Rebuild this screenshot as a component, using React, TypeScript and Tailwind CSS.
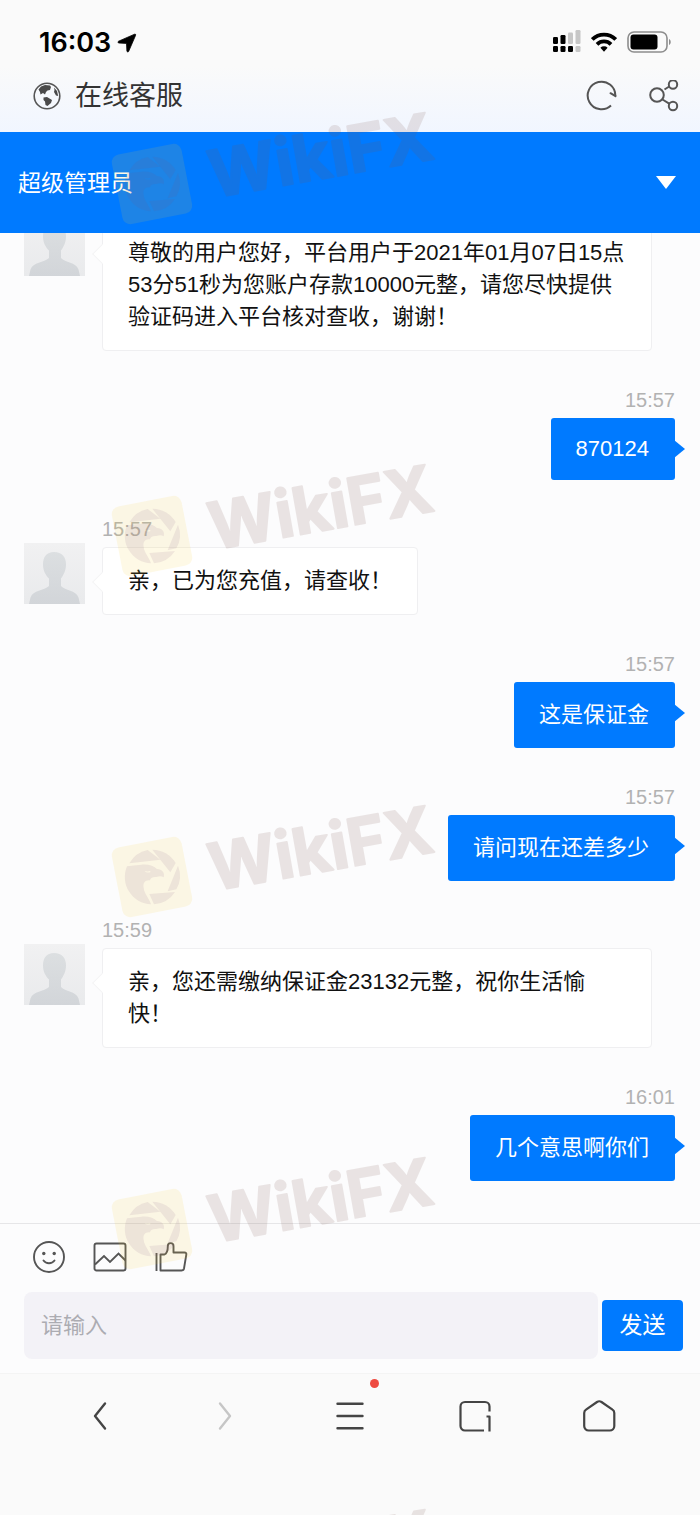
import { useState } from 'react'

type Message = {
  id: number
  from: 'agent' | 'me'
  time: string
  text: string
}

const MESSAGES: Message[] = [
  {
    id: 1,
    from: 'agent',
    time: '15:54',
    text: '尊敬的用户您好，平台用户于2021年01月07日15点53分51秒为您账户存款10000元整，请您尽快提供验证码进入平台核对查收，谢谢！',
  },
  { id: 2, from: 'me', time: '15:57', text: '870124' },
  { id: 3, from: 'agent', time: '15:57', text: '亲，已为您充值，请查收！' },
  { id: 4, from: 'me', time: '15:57', text: '这是保证金' },
  { id: 5, from: 'me', time: '15:57', text: '请问现在还差多少' },
  {
    id: 6,
    from: 'agent',
    time: '15:59',
    text: '亲，您还需缴纳保证金23132元整，祝你生活愉快！',
  },
  { id: 7, from: 'me', time: '16:01', text: '几个意思啊你们' },
]

const WATERMARK_TOPS = ['top-[94px]', 'top-[446px]', 'top-[787px]', 'top-[1139px]', 'top-[1491px]']

function StatusBar() {
  return (
    <div className="flex h-[66px] items-end justify-between pr-7 pb-[7px] pl-[39px]">
      <div className="flex items-center gap-1.5">
        <span className="font-['Inter',sans-serif] text-[27px] leading-8 font-semibold text-black">16:03</span>
        <svg width="20" height="20" viewBox="0 0 20 20" aria-hidden="true">
          <path
            d="M17.6 1.2 1.6 8.2c-1 .5-.8 1.7.3 1.8l7.6.4.4 7.6c.1 1.1 1.4 1.3 1.8.3l6.9-16c.3-.8-.3-1.4-1-1.1Z"
            fill="#000"
            stroke="#000"
            strokeWidth=".8"
          />
        </svg>
      </div>
      <div className="flex items-center gap-2.5 pb-1.5">
        <svg width="29" height="23" viewBox="0 0 29 23" aria-hidden="true">
          <g fill="#000">
            <rect x="1" y="7" width="5" height="7" rx="1.2" />
            <rect x="8.5" y="5" width="5" height="9" rx="1.2" />
            <rect x="1" y="16" width="5" height="6" rx="1.2" />
            <rect x="8.5" y="16" width="5" height="6" rx="1.2" />
            <rect x="16" y="16" width="5" height="6" rx="1.2" />
          </g>
          <g fill="#c6c6c6">
            <rect x="16" y="2.5" width="5" height="11.5" rx="1.2" />
            <rect x="23.5" y="0" width="5" height="14" rx="1.2" />
            <rect x="23.5" y="16" width="5" height="6" rx="1.2" />
          </g>
        </svg>
        <svg width="26" height="20" viewBox="0 0 26 20" aria-hidden="true">
          <g fill="none" stroke="#000" strokeWidth="3.8">
            <path d="M1.3 7.5a16.7 16.7 0 0 1 23.4 0" />
            <path d="M6 12.3a10 10 0 0 1 14 0" />
          </g>
          <path d="M9.4 15.8a5.2 5.2 0 0 1 7.2 0L13 19.7Z" fill="#000" />
        </svg>
        <svg width="45" height="22" viewBox="0 0 45 22" aria-hidden="true">
          <rect x="1" y="1" width="39" height="20" rx="6" fill="none" stroke="#8d8d8d" strokeWidth="1.6" />
          <rect x="3.5" y="3.5" width="27" height="15" rx="3" fill="#000" />
          <path d="M42 8c2.3 1 2.3 5 0 6Z" fill="#8d8d8d" />
        </svg>
      </div>
    </div>
  )
}

function TitleBar() {
  return (
    <div className="flex h-[66px] items-center justify-between bg-linear-to-b from-[#fafafa] to-[#f1f6ff] pr-[21px] pb-1.5 pl-[33px]">
      <div className="flex items-center gap-3.5">
        <svg width="28" height="28" viewBox="0 0 28 28" aria-hidden="true">
          <circle cx="14" cy="14" r="12.8" fill="none" stroke="#555" strokeWidth="1.6" />
          <path
            d="M5.5 7.5 8 4.500 12 3l5 .5 1 1.500-1 3-2.500.5L13 10l-1 2.500-2-1.500-2.500 1.500-.5-2.500Z"
            fill="#4a4a4a"
          />
          <path d="M10.500 15.500 14 15l5 3-1 3-3.500 3-2-1-.5-3.500-1.500-1.500Z" fill="#4a4a4a" />
          <path d="m21 5.500 3 3.500 1.200 5-2.200-.5-2-3.500.5-2Z" fill="#4a4a4a" />
        </svg>
        <h1 className="text-[27px] leading-9 text-[#333]">在线客服</h1>
      </div>
      <div className="flex items-center gap-[31px]">
        <button type="button" aria-label="刷新" className="size-8">
          <svg width="32" height="32" viewBox="0 0 32 32" fill="none" stroke="#555" strokeWidth="2">
            <path d="M25 25.500A13.800 13.800 0 1 1 29.300 16" />
            <path d="M24.500 13.200 29.500 16.200" strokeLinecap="round" />
          </svg>
        </button>
        <button type="button" aria-label="分享" className="h-8 w-[30px]">
          <svg width="30" height="32" viewBox="0 0 30 32" fill="none" stroke="#555" strokeWidth="2">
            <circle cx="8" cy="15" r="6.8" />
            <circle cx="24" cy="4.500" r="4.200" />
            <circle cx="24" cy="26" r="4.200" />
            <path d="m15.500 9.500 4.700-3M13.500 19.500l6.700 4.200" />
          </svg>
        </button>
      </div>
    </div>
  )
}

function Avatar() {
  return (
    <svg className="shrink-0" width="61" height="61" viewBox="0 0 61 61" role="img" aria-label="客服头像">
      <defs>
        <linearGradient id="avatarBg" x1="0" y1="0" x2="0" y2="1">
          <stop offset="0" stopColor="#f1f1f2" />
          <stop offset="1" stopColor="#e9eaec" />
        </linearGradient>
        <linearGradient id="avatarBody" x1="0" y1="0" x2="0" y2="1">
          <stop offset="0" stopColor="#dcdfe1" />
          <stop offset="1" stopColor="#d2d5d9" />
        </linearGradient>
      </defs>
      <rect width="61" height="61" fill="url(#avatarBg)" />
      <path
        d="M30 9c8 0 12 5 12 12.500 0 6-2.500 10.500-5 14V43c4 4.500 15 4 17.500 11.500L56 61H5l1.500-6.500C9 47 20 47.500 25 43v-7.500c-3.500-3.500-6-8-6-14C19 14 22.500 9 30 9Z"
        fill="url(#avatarBody)"
      />
    </svg>
  )
}

function AgentMessage({ message }: { message: Message }) {
  return (
    <li className="mr-[23px] flex gap-[17px] pt-[37px]">
      <div className="mt-[26px]">
        <Avatar />
      </div>
      <div className="flex min-w-0 flex-col items-start">
        <time className="mb-1.5 text-xl leading-6 text-[#b2b2b2]">{message.time}</time>
        <div className="relative rounded-sm border border-[#efeff1] bg-white px-[25px] py-[17px]">
          <span className="absolute top-[27px] -left-2 size-3.5 rotate-45 border-b border-l border-[#f4f4f5] bg-white" />
          <p className="text-[22px] leading-8 text-[#111]">{message.text}</p>
        </div>
      </div>
    </li>
  )
}

function MyMessage({ message }: { message: Message }) {
  const digitsOnly = /^\d+$/.test(message.text)
  return (
    <li className="flex flex-col items-end pt-[37px]">
      <time className="mb-1.5 text-xl leading-6 text-[#b2b2b2]">{message.time}</time>
      <div className="relative rounded-[3px] bg-[#007aff] py-[17px] pr-[26px] pl-[25px]">
        <svg className="absolute top-[22px] -right-2.5" width="11" height="18" viewBox="0 0 11 18" aria-hidden="true">
          <path d="M0 0 11 9 0 18Z" fill="#007aff" />
        </svg>
        <p className={`text-[22px] text-white ${digitsOnly ? 'leading-7' : 'leading-8'}`}>{message.text}</p>
      </div>
    </li>
  )
}

function Composer() {
  const [draft, setDraft] = useState('')

  return (
    <form
      className="border-t border-[#e6e6e8] bg-[#fcfcfd] pt-4 pr-[17px] pb-3.5 pl-6"
      onSubmit={(e) => {
        e.preventDefault()
        setDraft('')
      }}
    >
      <div className="flex h-[34px] gap-[27px] pl-2">
        <button type="button" aria-label="表情">
          <svg width="34" height="34" viewBox="0 0 34 34" fill="none" stroke="#555" strokeWidth="1.9">
            <circle cx="17" cy="17" r="15" />
            <circle cx="11.8" cy="13.5" r="1.7" fill="#555" stroke="none" />
            <circle cx="22.2" cy="13.5" r="1.7" fill="#555" stroke="none" />
            <path d="M11.5 20.500c2.500 3.600 8.500 3.600 11 0" strokeLinecap="round" />
          </svg>
        </button>
        <button type="button" aria-label="图片">
          <svg width="34" height="34" viewBox="0 0 34 34" fill="none" stroke="#555" strokeWidth="1.9">
            <rect x="1.5" y="3.5" width="31" height="27" rx="2" />
            <path d="m2 24.500 9-8.500 6 6 8.500-8.500 7 7" />
          </svg>
        </button>
        <button type="button" aria-label="点赞">
          <svg width="34" height="34" viewBox="0 0 34 34" fill="none" stroke="#555" strokeWidth="1.9">
            <path d="M2.500 13v18" />
            <path
              d="M6.500 14.500h4c3.500-1.500 3.300-5 3.300-8.500 0-3.800 5.700-3.800 5.700 0v6.500h11c1.500 0 2 .8 1.800 2.200L30 28.500c-.3 1.400-1 2-2.500 2h-21Z"
              strokeLinejoin="round"
            />
          </svg>
        </button>
      </div>
      <div className="mt-[18px] flex items-center gap-1">
        <input
          type="text"
          aria-label="消息内容"
          placeholder="请输入"
          value={draft}
          onChange={(e) => setDraft(e.target.value)}
          className="h-[67px] min-w-0 flex-1 rounded-lg bg-[#f3f2f7] px-[17px] text-[22px] text-[#333] outline-none placeholder:text-[#acacb2]"
        />
        <button type="submit" className="h-[51px] w-[81px] rounded bg-[#007aff] text-[23px] text-white">
          发送
        </button>
      </div>
    </form>
  )
}

function BrowserNav() {
  return (
    <nav className="h-[142px] border-t border-[#f4f4f4] bg-[#fafafa] px-[37px] pt-[25px]">
      <div className="grid grid-cols-5 justify-items-center">
        <button type="button" aria-label="后退">
          <svg width="34" height="34" viewBox="0 0 34 34" fill="none" stroke="#444" strokeWidth="2.4">
            <path d="M22 4.500 12 17l10 12.500" strokeLinecap="round" strokeLinejoin="round" />
          </svg>
        </button>
        <button type="button" aria-label="前进" disabled>
          <svg width="34" height="34" viewBox="0 0 34 34" fill="none" stroke="#c6c6c6" strokeWidth="2.4">
            <path d="m12 4.500 10 12.500-10 12.500" strokeLinecap="round" strokeLinejoin="round" />
          </svg>
        </button>
        <button type="button" aria-label="菜单" className="relative">
          <svg width="34" height="34" viewBox="0 0 34 34" fill="none" stroke="#444" strokeWidth="2.4">
            <path d="M4.500 4.800h25M4.500 17h25M4.500 29.300h25" strokeLinecap="round" />
          </svg>
          <span className="absolute -top-5 -right-3 size-[9px] rounded-full bg-[#ee4a40]" />
        </button>
        <button type="button" aria-label="标签页">
          <svg width="34" height="34" viewBox="0 0 34 34" fill="none" stroke="#444" strokeWidth="2.2">
            <path d="M26 31.500H7A4.500 4.500 0 0 1 2.500 27V7.500A4.500 4.500 0 0 1 7 3h20a4.500 4.500 0 0 1 4.500 4.500V12.500" />
            <path d="M28.500 17.500h3v15" strokeLinejoin="round" />
          </svg>
        </button>
        <button type="button" aria-label="主页">
          <svg width="34" height="34" viewBox="0 0 34 34" fill="none" stroke="#444" strokeWidth="2.2">
            <path
              d="M1.200 14c0-1.500.6-2.500 1.800-3.300L14 3c1.500-1 3-1 4.500 0l11 7.700c1.200.8 1.800 1.800 1.800 3.300v13a4.500 4.500 0 0 1-4.500 4.500H5.700A4.500 4.500 0 0 1 1.200 27Z"
              strokeLinejoin="round"
            />
          </svg>
        </button>
      </div>
    </nav>
  )
}

function Watermark({ className }: { className: string }) {
  return (
    <svg className={`absolute left-[108px] ${className}`} width="350" height="140" viewBox="0 0 350 140" aria-hidden="true">
      <rect x="8.500" y="54.500" width="71" height="71" rx="8" transform="rotate(-11 44 90)" fill="#f5ca34" fillOpacity=".12" />
      <g transform="translate(0 45) scale(.3333)" fill="#7d557f" fillOpacity=".11">
        {/* shutter blades */}
        <path d="M64 94A82 82 0 0 1 119 54L157 83Z" />
        <path d="M133 53A82 82 0 0 1 203 93L187 121Z" />
        <path d="M210 101A82 82 0 0 1 205 172L179 178Z" />
        <path d="M201 180A82 82 0 0 1 138 217L124 186Z" />
        {/* eagle head */}
        <path
          fillRule="evenodd"
          d="M57 103 100 98c22-2 38 4 47 13 15 1 24 10 20 25-7-5-15-3-22-1-12-1-18 3-19 10-15-2-22 8-19 23 2 18 15 28 22 49A82 82 0 0 1 57 103ZM110 117c4 5 12 6 18 3l-2-3c-5 2-10 2-16 0Z"
        />
      </g>
      <text
        x="105"
        y="104"
        transform="rotate(-10 105 104)"
        fontFamily="Inter, sans-serif"
        fontSize="65"
        fontWeight="700"
        fill="#7d554f"
        stroke="#7d554f"
        strokeWidth="2"
        strokeLinejoin="round"
        opacity=".14"
      >
        WikiFX
      </text>
    </svg>
  )
}

export default function App() {
  return (
    <div className="relative flex h-screen flex-col overflow-hidden bg-[#fcfcfd] font-['Liberation_Sans','Noto_Sans_CJK_SC',sans-serif]">
      <header className="shrink-0 bg-[#fafafa]">
        <StatusBar />
        <TitleBar />
        <div className="flex h-[101px] items-center justify-between bg-[#007aff] pr-[23px] pl-[18px] text-white">
          <h2 className="text-[23px] leading-8">超级管理员</h2>
          <button type="button" aria-label="展开">
            <svg width="22" height="14" viewBox="0 0 22 14">
              <path d="M1 0h20L11 13Z" fill="#fff" />
            </svg>
          </button>
        </div>
      </header>

      {/* newest message stays pinned to the bottom edge */}
      <main className="flex min-h-0 flex-1 flex-col justify-end overflow-hidden pr-[25px] pb-[42px] pl-6">
        <ul className="flex flex-col">
          {MESSAGES.map((m) =>
            m.from === 'agent' ? <AgentMessage key={m.id} message={m} /> : <MyMessage key={m.id} message={m} />,
          )}
        </ul>
      </main>

      <footer className="shrink-0">
        <Composer />
        <BrowserNav />
      </footer>

      <div className="pointer-events-none absolute inset-0 overflow-hidden">
        {WATERMARK_TOPS.map((top) => (
          <Watermark key={top} className={top} />
        ))}
      </div>
    </div>
  )
}
